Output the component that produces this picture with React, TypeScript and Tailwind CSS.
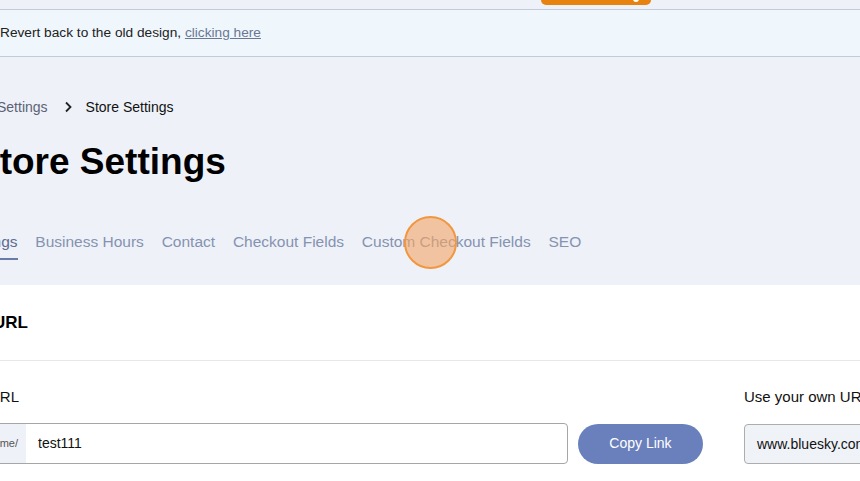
import React from 'react';

const tabs = ['Business Hours', 'Contact', 'Checkout Fields', 'Custom Checkout Fields', 'SEO'];

const App: React.FC = () => {
  return (
    <div
      className="relative w-[860px] h-[481px] overflow-hidden bg-white text-[#111]"
      style={{ fontFamily: '"Liberation Sans", Arial, sans-serif' }}
    >
      {/* top bar (only the bottom edge shows) */}
      <div className="h-[10px] bg-[#eef1f8] border-b border-[#c3cad9] overflow-hidden flex">
        <div className="ml-[541px] w-[110px] h-[32px] -mt-[27px] rounded-[5px] bg-[#e8820f] flex items-end justify-end pr-[12px] pb-[3px]">
          <span className="block w-[6px] h-[6px] rounded-full bg-white" />
        </div>
      </div>

      {/* banner */}
      <div className="h-[47px] bg-[#eff7fd] border-b border-[#c3cad9] flex items-center text-[13.7px] text-[#222]">
        <span>
          Revert back to the old design,{' '}
          <a href="#" className="underline text-[#6b7893]">clicking here</a>
        </span>
      </div>

      {/* header */}
      <div className="h-[228px] bg-[#eef1f8] pt-[40px]">
        <div className="flex items-center h-[20px] text-[14px] ml-[-3px]">
          <span className="text-[#5b6275]">Settings</span>
          <svg width="10" height="12" viewBox="0 0 10 12" className="ml-[15px] mr-[13px]">
            <path d="M3 1.5 L7.5 6 L3 10.5" fill="none" stroke="#222" strokeWidth="1.8" />
          </svg>
          <span className="text-[#111]">Store Settings</span>
        </div>
        <h1 className="mt-[25px] ml-[-25px] h-[40px] leading-[40px] text-[37px] font-bold text-black whitespace-nowrap">
          Store Settings
        </h1>
        <div className="mt-[50px] flex gap-[17.8px] text-[15.5px] whitespace-nowrap ml-[-38.5px]">
          <div className="flex flex-col">
            <span className="h-[20px] leading-[20px] text-[#5d6b8f]">Settings</span>
            <span className="mt-[6px] h-[2px] bg-[#6b7aa6]" />
          </div>
          {tabs.map((t) => (
            <span key={t} className="h-[20px] leading-[20px] text-[#8593b0]">
              {t}
            </span>
          ))}
        </div>
      </div>

      {/* content */}
      <div className="bg-white">
        <div className="h-[76px] flex items-center ml-[-7px] border-b border-[#e5e7eb]">
          <h2 className="text-[17px] font-bold text-black">URL</h2>
        </div>
        <div className="flex ml-[-11px] pt-[26px] whitespace-nowrap">
          <div className="w-[714px] shrink-0">
            <div className="h-[20px] leading-[20px] text-[15px] text-[#111]">URL</div>
            <div className="mt-[16px] flex items-center gap-[10px]">
              <div className="flex-1 h-[41px] flex border border-[#a6a6a6] rounded-[4px] overflow-hidden">
                <div className="w-[36px] bg-[#eef1f8] flex items-center justify-end pr-[8px] overflow-hidden text-[11px] text-[#555]">
                  bluesky.me/
                </div>
                <div className="flex-1 flex items-center pl-[12px] text-[14px] text-[#111]">test111</div>
              </div>
              <button className="w-[125px] h-[40px] rounded-full bg-[#6a80bc] text-white text-[14px]">
                Copy Link
              </button>
            </div>
          </div>
          <div className="ml-[41px] w-[300px] shrink-0">
            <div className="h-[20px] leading-[20px] text-[15px] text-[#111]">Use your own URL</div>
            <div className="mt-[17px] h-[40px] flex items-center pl-[12px] border border-[#adadad] rounded-[4px] bg-[#eff3f8] text-[14px] text-[#111]">
              www.bluesky.com
            </div>
          </div>
        </div>
      </div>

      {/* click indicator */}
      <div className="absolute left-[404px] top-[216px] w-[53px] h-[53px] rounded-full bg-[#f5a565]/60 border-2 border-[#f0973f]" />
    </div>
  );
};

export default App;
